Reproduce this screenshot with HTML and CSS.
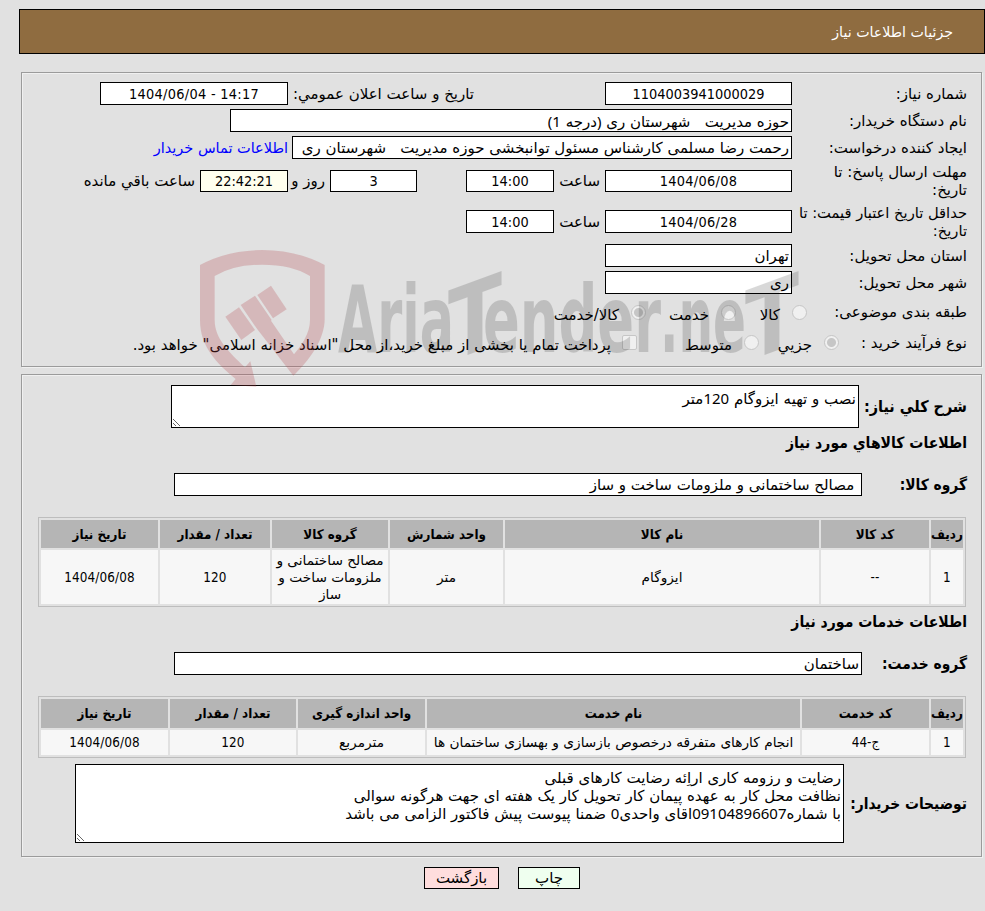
FILE: index.html
```html
<!DOCTYPE html>
<html lang="fa" dir="rtl">
<head>
    <meta charset="UTF-8">
    <meta name="viewport" content="width=device-width, initial-scale=1.0">
    <title>جزئیات اطلاعات نیاز</title>
    <link rel="stylesheet" href="styles.css">
</head>
<body>
    <div class="page">
        <div class="title-bar"><span>جزئیات اطلاعات نیاز</span></div>

        <div class="panel info">
            <div class="row">
                <div class="label">شماره نیاز:</div>
                <input type="text" class="field w-main num" value="1104003941000029" readonly>
                <div class="text announce">تاریخ و ساعت اعلان عمومي:</div>
                <input type="text" class="field w-announce num date" value="1404/06/04 - 14:17" dir="ltr" readonly>
            </div>
            <div class="row">
                <div class="label">نام دستگاه خریدار:</div>
                <input type="text" class="field w-buyer mixed" value="حوزه مدیریت   شهرستان ری (درجه 1)" readonly>
            </div>
            <div class="row">
                <div class="label">ایجاد کننده درخواست:</div>
                <input type="text" class="field w-creator" value="رحمت رضا مسلمی کارشناس مسئول توانبخشی حوزه مدیریت   شهرستان ری" readonly>
                <a class="link">اطلاعات تماس خریدار</a>
            </div>
            <div class="row tall">
                <div class="label">مهلت ارسال پاسخ: تا<br>تاریخ:</div>
                <input type="text" class="field w-main num date" value="1404/06/08" readonly>
                <div class="text clock">ساعت</div>
                <input type="text" class="field w-small num" value="14:00" readonly>
                <input type="text" class="field w-days num days" value="3" readonly>
                <div class="text day">روز و</div>
                <input type="text" class="field w-small num timer" value="22:42:21" readonly>
                <div class="text remain">ساعت باقي مانده</div>
            </div>
            <div class="row tall price">
                <div class="label wide">حداقل تاریخ اعتبار قیمت: تا<br>تاریخ:</div>
                <input type="text" class="field w-main num date" value="1404/06/28" readonly>
                <div class="text clock">ساعت</div>
                <input type="text" class="field w-small num" value="14:00" readonly>
            </div>
            <div class="row">
                <div class="label">استان محل تحویل:</div>
                <input type="text" class="field w-main" value="تهران" readonly>
            </div>
            <div class="row">
                <div class="label">شهر محل تحویل:</div>
                <input type="text" class="field w-main" value="ری" readonly>
            </div>
            <div class="row options subject">
                <div class="label">طبقه بندی موضوعی:</div>
                <span class="radio"></span><span class="opt o-goods">کالا</span>
                <span class="radio"></span><span class="opt o-service">خدمت</span>
                <span class="radio checked"></span><span class="opt o-both">کالا/خدمت</span>
            </div>
            <div class="row options process">
                <div class="label">نوع فرآیند خرید :</div>
                <span class="radio checked"></span><span class="opt o-minor">جزیي</span>
                <span class="radio"></span><span class="opt o-medium">متوسط</span>
                <span class="checkbox"></span><span class="opt o-pay">پرداخت تمام یا بخشی از مبلغ خرید،از محل "اسناد خزانه اسلامی" خواهد بود.</span>
            </div>
        </div>

        <div class="panel details">
            <div class="block">
                <div class="bold-label l-desc">شرح کلي نیاز:</div>
                <textarea class="area a-desc mixed" readonly>نصب و تهیه ایزوگام 120متر</textarea>
            </div>

            <h3>اطلاعات کالاهاي مورد نیاز</h3>
            <div class="block">
                <div class="bold-label l-group">گروه کالا:</div>
                <input type="text" class="field w-group" value=" مصالح ساختمانی و ملزومات ساخت و ساز" readonly>
            </div>
            <table class="grid goods">
                <colgroup><col class="c32"><col class="c108"><col class="c314"><col class="c113"><col class="c116"><col class="c110"><col class="c117"></colgroup>
                <tr>
                    <th>ردیف</th><th>کد کالا</th><th>نام کالا</th><th>واحد شمارش</th><th>گروه کالا</th><th>تعداد / مقدار</th><th>تاریخ نیاز</th>
                </tr>
                <tr>
                    <td class="n">1</td><td class="n">--</td><td>ایزوگام</td><td>متر</td><td>مصالح ساختمانی و<br>ملزومات ساخت و<br>ساز</td><td class="n">120</td><td class="n">1404/06/08</td>
                </tr>
            </table>

            <h3>اطلاعات خدمات مورد نیاز</h3>
            <div class="block">
                <div class="bold-label l-group">گروه خدمت:</div>
                <input type="text" class="field w-group" value="ساختمان" readonly>
            </div>
            <table class="grid services">
                <colgroup><col class="c32"><col class="c127"><col class="c373"><col class="c127"><col class="c126"><col class="c127"></colgroup>
                <tr>
                    <th>ردیف</th><th>کد خدمت</th><th>نام خدمت</th><th>واحد اندازه گیری</th><th>تعداد / مقدار</th><th>تاریخ نیاز</th>
                </tr>
                <tr>
                    <td class="n">1</td><td class="n">ج-44</td><td>انجام کارهای متفرقه درخصوص بازسازی و بهسازی ساختمان ها</td><td>مترمربع</td><td class="n">120</td><td class="n">1404/06/08</td>
                </tr>
            </table>

            <div class="block">
                <div class="bold-label l-notes">توضیحات خریدار:</div>
                <textarea class="area a-notes mixed" readonly>رضایت و رزومه کاری اراِئه رضایت کارهای قبلی
نظافت محل کار به عهده پیمان کار تحویل کار یک هفته ای جهت هرگونه سوالی
با شماره09104896607اقای واحدی0 ضمنا پیوست پیش فاکتور الزامی می باشد</textarea>
            </div>
        </div>

        <div class="buttons">
            <button type="button" class="btn print">چاپ</button>
            <button type="button" class="btn back">بازگشت</button>
        </div>

        <svg class="watermark" width="620" height="150" viewBox="0 0 620 150" direction="ltr">
            <g class="shield" transform="translate(-90,-20) scale(0.33333)">
                <path d="M570 135Q655 90 757 90Q860 90 944 135V297C944 360 895 425 850 467L742 328L692 255L735 227L785 300L783 302L852 403C875 375 900 340 900 300V168Q845 134 757 134Q670 134 614 168V300C614 355 655 395 705 442L721 424L739 500L662 495L677 477C620 430 570 380 570 300Z"/>
                <path d="M687 262L735 330L694 360L646 290Z"/>
                <path d="M783 197L830 268L789 295L742 225Z"/>
            </g>
            <g class="brand">
                <text x="238" y="112" font-size="92" textLength="116" lengthAdjust="spacingAndGlyphs">Aria</text>
                <text transform="translate(348,122) skewY(-20)" font-size="98" textLength="54" lengthAdjust="spacingAndGlyphs">T</text>
                <text x="383" y="112" font-size="92" textLength="178" lengthAdjust="spacingAndGlyphs">ender</text>
                <text x="560" y="112" font-size="92" textLength="86" lengthAdjust="spacingAndGlyphs">.ne</text>
                <text transform="translate(645,122) skewY(-20)" font-size="98" textLength="54" lengthAdjust="spacingAndGlyphs">T</text>
            </g>
        </svg>
    </div>
</body>
</html>
```
FILE: styles.css
```css
* {
    box-sizing: border-box;
}

body {
    margin: 0;
    background-color: #e1e1e1;
    color: #000;
    font-family: "DejaVu Sans", sans-serif;
    font-size: 15px;
}

.page {
    position: relative;
    width: 985px;
    height: 911px;
    overflow: hidden;
    padding-top: 9px;
}

.title-bar {
    display: flex;
    align-items: center;
    height: 45px;
    margin-left: 19px;
    padding-right: 31px;
    border: 1px solid #000;
    background-color: #8f6c40;
    color: #fff;
    font-size: 14.2px;
}

.panel {
    width: 961px;
    margin-right: 3px;
    border: 1px solid #9b9b9b;
    box-shadow: 1px 1px 0 #f0f0f0, inset 1px 1px 0 #f0f0f0;
}

.info {
    height: 295px;
    margin-top: 18px;
    padding: 7px 14px 0 0;
}

.row {
    display: flex;
    align-items: center;
    height: 27px;
    white-space: nowrap;
}

.tall {
    height: 40px;
}

.price {
    height: 41px;
}

.label {
    width: 175px;
    flex: none;
    line-height: 18px;
}

.wide {
    font-size: 14.7px;
}

.field {
    flex: none;
    height: 23px;
    margin: 0;
    padding: 0 2px;
    border: 1px solid #000;
    background-color: #fff;
    color: #000;
    font: inherit;
    outline: none;
}

.tall .field {
    height: 22px;
}

.price .field {
    height: 23px;
}

/* narrow digits */
.num {
    font-family: "DejaVu Sans Condensed", "DejaVu Sans", sans-serif;
    font-size: 14.4px;
    text-align: center;
}

.date {
    letter-spacing: 0.3px;
}

/* persian text with digits inside */
.mixed {
    font-family: "Noto Sans", "DejaVu Sans", sans-serif;
    font-size: 15px;
    word-spacing: 0.9px;
}

.w-main { width: 187px; }
.w-announce { width: 188px; }
.w-buyer { width: 562px; }
.w-creator { width: 500px; }
.w-small { width: 88px; }
.w-days { width: 87px; }
.w-group { width: 688px; }

.announce {
    width: 186px;
    margin-right: 131px;
}

.clock {
    width: 51px;
    padding-right: 5px;
}

.days {
    margin-right: 49px;
}

.day {
    width: 42px;
    padding-right: 5px;
}

.timer {
    background-color: #ffffee;
}

.remain {
    margin-right: 5px;
}

.link {
    margin-right: 4px;
    color: #0000ff;
    font-size: 14.5px;
}

.subject {
    height: 32px;
}

.process {
    height: 29px;
}

.subject .label {
    width: 160px;
}

.process .label {
    width: 128px;
}

.radio {
    flex: none;
    width: 15px;
    height: 15px;
    border: 1px solid #c6c6c6;
    border-radius: 50%;
    background-color: #f0f0f0;
}

.radio.checked {
    background: radial-gradient(circle, #c6c6c6 0 4px, #f0f0f0 5px);
}

.checkbox {
    flex: none;
    width: 15px;
    height: 15px;
    border: 1px solid #c6c6c6;
    border-radius: 2px;
    background-color: #f0f0f0;
}

.opt {
    padding-top: 5px;
    padding-right: 12px;
}

.o-goods { width: 56px; }
.o-service { width: 75px; }
.o-minor { width: 65px; }
.o-medium { width: 107px; }
.o-pay { padding-right: 11px; }

.details {
    height: 483px;
    margin-top: 7px;
    padding: 10px 14px 0 0;
}

.block {
    display: flex;
    align-items: center;
    white-space: nowrap;
}

.bold-label {
    flex: none;
    font-family: "DejaVu Sans Condensed", "DejaVu Sans", sans-serif;
    font-weight: bold;
    font-size: 15.4px;
}

.l-desc {
    width: 108px;
    font-size: 16px;
}

.l-group { width: 105px; }
.l-notes { width: 123px; }

.area {
    display: block;
    margin: 0;
    padding: 3px 2px;
    border: 1px solid #000;
    background-color: #fff;
    color: #000;
    line-height: 18px;
    outline: none;
    white-space: pre;
    overflow: hidden;
}

.a-desc {
    width: 688px;
    height: 43px;
}

.a-notes {
    width: 769px;
    height: 79px;
}

h3 {
    height: 30px;
    margin: 0 0 15px;
    font-family: "DejaVu Sans Condensed", "DejaVu Sans", sans-serif;
    font-size: 15.6px;
    line-height: 30px;
}

.grid {
    width: 928px;
    margin: 21px 1px 0 0;
    border: 1px solid #bdbdbd;
    border-spacing: 2px;
    table-layout: fixed;
    text-align: center;
    white-space: nowrap;
}

.grid th,
.grid td {
    padding: 0;
    line-height: 17px;
    overflow: hidden;
}

.grid th {
    height: 28px;
    background-color: #b5b5b5;
    font-family: "DejaVu Sans Condensed", "DejaVu Sans", sans-serif;
    font-size: 13.3px;
}

.grid td {
    height: 54px;
    background-color: #f7f7f7;
    font-size: 13.7px;
}

.grid td.n {
    font-family: "DejaVu Sans Condensed", "DejaVu Sans", sans-serif;
    font-size: 13.4px;
    letter-spacing: 0.1px;
}

.services {
    margin-bottom: 6px;
}

.services th { height: 29px; }
.services td { height: 25px; }

.c32 { width: 32px; }
.c108 { width: 108px; }
.c110 { width: 110px; }
.c113 { width: 113px; }
.c116 { width: 116px; }
.c117 { width: 117px; }
.c126 { width: 126px; }
.c127 { width: 127px; }
.c314 { width: 314px; }
.c373 { width: 373px; }

.buttons {
    display: flex;
    gap: 19px;
    margin-top: 10px;
    padding-right: 405px;
}

.btn {
    height: 22px;
    padding: 0;
    border: 1px solid #000;
    color: #000;
    font: inherit;
    line-height: 20px;
}

.print {
    width: 62px;
    background-color: #efffef;
}

.back {
    width: 75px;
    background-color: #ffdddd;
}

.watermark {
    position: absolute;
    top: 240px;
    left: 100px;
    overflow: visible;
    direction: ltr;
    pointer-events: none;
}

.shield {
    fill: rgba(181, 65, 73, 0.25);
}

.brand {
    fill: #000;
    opacity: 0.15;
    font-family: "DejaVu Sans Condensed", "DejaVu Sans", sans-serif;
    font-weight: bold;
}
```
